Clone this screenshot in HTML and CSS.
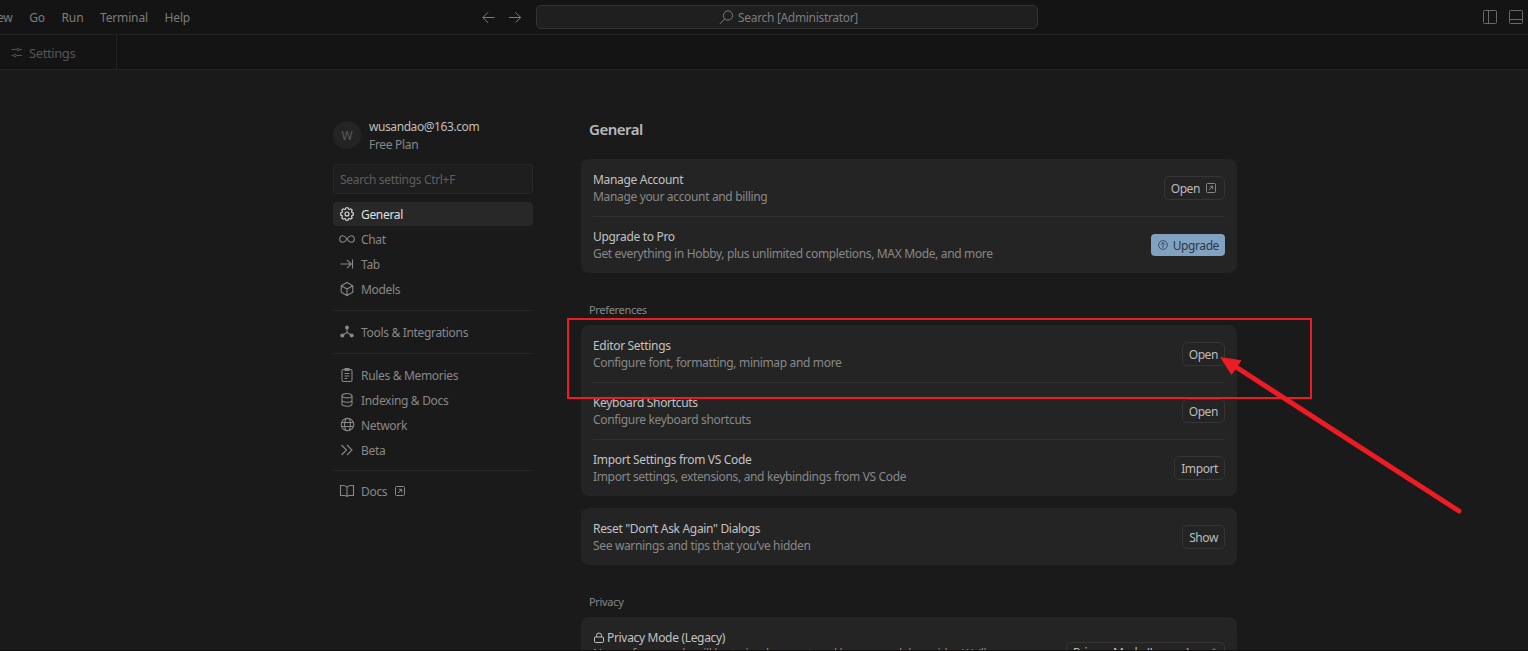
FILE: index.html
```
<!DOCTYPE html>
<html lang="en">
<head>
    <meta charset="UTF-8">
    <meta name="viewport" content="width=device-width, initial-scale=1.0">
    <title>Settings</title>
    <link rel="stylesheet" href="styles.css">
</head>
<body>
    <header class="titlebar">
        <nav class="menu">
            <span class="menu-view">View</span>
            <span>Go</span>
            <span>Run</span>
            <span>Terminal</span>
            <span>Help</span>
        </nav>
        <div class="history">
            <svg width="14" height="14" viewBox="0 0 14 14"><path d="M13.5 7.5H2M7 2.3L1.8 7.5 7 12.7"/></svg>
            <svg width="14" height="14" viewBox="0 0 14 14"><path d="M1 7.5h11.5M7.500 2.3l5.200 5.2-5.200 5.2"/></svg>
        </div>
        <div class="command">
            <svg width="15" height="15" viewBox="0 0 15 15"><circle cx="9" cy="5.5" r="4.6"/><path d="M5.7 8.8L1 13.8"/></svg>
            <span>Search [Administrator]</span>
        </div>
        <div class="layout-icons">
            <svg width="16" height="16" viewBox="0 0 16 16"><rect x="1.5" y="1.5" width="13" height="13" rx="1"/><path d="M6.5 1.5v13"/></svg>
            <svg width="16" height="16" viewBox="0 0 16 16"><rect x="1.5" y="1.5" width="13" height="13" rx="1"/><path d="M1.5 10.5h13"/></svg>
        </div>
    </header>

    <div class="tabs">
        <div class="tab">
            <svg width="12" height="12" viewBox="0 0 12 12"><path d="M.5 2.5h5M8.5 2.5H11M.5 8.5h2M5.5 8.5H11"/><circle cx="7" cy="2.5" r="1.3"/><circle cx="4" cy="8.5" r="1.3"/></svg>
            <span>Settings</span>
        </div>
    </div>

    <div class="content">
        <aside class="sidebar">
            <div class="profile">
                <div class="avatar">W</div>
                <div>
                    <div class="email">wusandao@163.com</div>
                    <div class="plan">Free Plan</div>
                </div>
            </div>
            <div class="search">Search settings Ctrl+F</div>

            <div class="nav active">
                <svg width="16" height="16" viewBox="0 0 16 16"><path d="M6.5 3L7 1.700h2L9.500 3l1 .4 1.300-.6 1.400 1.400-.6 1.300.4 1 1.300.5v2l-1.300.5-.4 1 .6 1.300-1.400 1.400-1.300-.6-1 .4L9 14.300H7L6.500 13l-1-.4-1.300.6-1.400-1.400.6-1.300-.4-1L1.700 9V7L3 6.500l.4-1-.6-1.300 1.400-1.400 1.300.6z"/><circle cx="8" cy="8" r="2"/></svg>
                <span>General</span>
            </div>
            <div class="nav">
                <svg width="16" height="16" viewBox="0 0 16 16"><path d="M8 8C6.5 5.7 5.5 4.7 4 4.7a3.300 3.300 0 0 0 0 6.600C5.500 11.300 6.500 10.300 8 8s2.500-3.300 4-3.300a3.300 3.300 0 0 1 0 6.600C10.500 11.300 9.500 10.300 8 8z"/></svg>
                <span>Chat</span>
            </div>
            <div class="nav">
                <svg width="16" height="16" viewBox="0 0 16 16"><path d="M1.500 8H12M8 3.800L12.200 8 8 12.200M13.500 3.500v9"/></svg>
                <span>Tab</span>
            </div>
            <div class="nav">
                <svg width="16" height="16" viewBox="0 0 16 16"><path d="M8 1.500l5.800 3.200v6.600L8 14.500l-5.800-3.200V4.700zM2.200 4.700L8 8l5.800-3.300M8 8v6.500"/></svg>
                <span>Models</span>
            </div>
            <div class="divider"></div>
            <div class="nav">
                <svg width="16" height="16" viewBox="0 0 16 16"><path d="M8 4v5M8 8.500l-4.500 2.700M8 8.500l4.500 2.700"/><g class="solid"><circle cx="8" cy="3.500" r="2"/><circle cx="3.300" cy="11.500" r="2"/><circle cx="12.700" cy="11.500" r="2"/></g></svg>
                <span>Tools &amp; Integrations</span>
            </div>
            <div class="divider"></div>
            <div class="nav">
                <svg width="16" height="16" viewBox="0 0 16 16"><rect x="3" y="2.500" width="10" height="12" rx="1.500"/><path d="M5.500 6.500h5M5.500 9h5M5.500 11.500h3"/><path class="solid" d="M5.500 1h5v3h-5z"/></svg>
                <span>Rules &amp; Memories</span>
            </div>
            <div class="nav">
                <svg width="16" height="16" viewBox="0 0 16 16"><ellipse cx="8" cy="3.700" rx="5" ry="2.200"/><path d="M3 3.700v8.300c0 3 10 3 10 0V3.700M3 8c0 3 10 3 10 0"/></svg>
                <span>Indexing &amp; Docs</span>
            </div>
            <div class="nav">
                <svg width="16" height="16" viewBox="0 0 16 16"><circle cx="8.500" cy="7.500" r="6.300"/><ellipse cx="8.500" cy="7.500" rx="2.900" ry="6.300"/><path d="M2.700 5.500h11.600M2.700 9.500h11.600"/></svg>
                <span>Network</span>
            </div>
            <div class="nav">
                <svg width="16" height="16" viewBox="0 0 16 16"><path d="M2.500 3l5 5-5 5M8 3l5 5-5 5"/></svg>
                <span>Beta</span>
            </div>
            <div class="divider last"></div>
            <div class="nav">
                <svg width="16" height="16" viewBox="0 0 16 16"><path d="M8 4C7 3 5.500 2.500 4 2.500H1.500v10H5c1.500 0 2.500.3 3 1 .5-.7 1.500-1 3-1h3.500v-10H12C10.500 2.500 9 3 8 4zM8 4v9.500"/></svg>
                <span>Docs</span>
                <svg class="external" width="10" height="10" viewBox="0 0 10 10"><rect x=".5" y=".5" width="9" height="9" rx="1"/><path d="M3 7l3.700-3.700M3.800 3.300h2.900v2.900"/></svg>
            </div>
        </aside>

        <main class="main">
            <h1>General</h1>
            <section class="card">
                <div class="row">
                    <div class="info">
                        <div class="name">Manage Account</div>
                        <div class="desc">Manage your account and billing</div>
                    </div>
                    <button class="btn">Open <svg class="external" width="10" height="10" viewBox="0 0 10 10"><rect x=".5" y=".5" width="9" height="9" rx="1"/><path d="M3 7l3.700-3.700M3.800 3.300h2.900v2.900"/></svg></button>
                </div>
                <div class="row">
                    <div class="info">
                        <div class="name">Upgrade to Pro</div>
                        <div class="desc">Get everything in Hobby, plus unlimited completions, MAX Mode, and more</div>
                    </div>
                    <button class="btn primary"><svg width="10" height="10" viewBox="0 0 10 10"><circle cx="5" cy="5" r="4.400"/><path d="M5 7.800V2.500M2.900 4.600L5 2.500l2.100 2.100"/></svg> Upgrade</button>
                </div>
            </section>

            <h2>Preferences</h2>
            <section class="card">
                <div class="row">
                    <div class="info">
                        <div class="name">Editor Settings</div>
                        <div class="desc">Configure font, formatting, minimap and more</div>
                    </div>
                    <button class="btn">Open</button>
                </div>
                <div class="row">
                    <div class="info">
                        <div class="name">Keyboard Shortcuts</div>
                        <div class="desc">Configure keyboard shortcuts</div>
                    </div>
                    <button class="btn">Open</button>
                </div>
                <div class="row">
                    <div class="info">
                        <div class="name">Import Settings from VS Code</div>
                        <div class="desc">Import settings, extensions, and keybindings from VS Code</div>
                    </div>
                    <button class="btn">Import</button>
                </div>
            </section>
            <section class="card reset">
                <div class="row">
                    <div class="info">
                        <div class="name">Reset "Don’t Ask Again" Dialogs</div>
                        <div class="desc">See warnings and tips that you’ve hidden</div>
                    </div>
                    <button class="btn">Show</button>
                </div>
            </section>

            <h2>Privacy</h2>
            <section class="card">
                <div class="row privacy">
                    <div class="info">
                        <div class="name"><svg width="12" height="12" viewBox="0 0 12 12"><rect x="1.500" y="5" width="9" height="5.500" rx="1"/><path d="M3.500 5V3.500a2.500 2.500 0 0 1 5 0V5"/></svg>Privacy Mode (Legacy)</div>
                        <div class="desc">None of your code will be trained on or stored by any model provider. We’ll</div>
                    </div>
                    <button class="btn select">Privacy Mode (Legacy) <svg width="8" height="12" viewBox="0 0 8 12"><path d="M1 4.500l3-3 3 3M1 7.500l3 3 3-3"/></svg></button>
                </div>
            </section>
        </main>
    </div>

    <!-- highlight box and arrow -->
    <svg class="annotation" width="1528" height="651" viewBox="0 0 1528 651">
        <rect x="568" y="319" width="743" height="79"/>
        <path d="M1236 367L1459 511"/>
        <polygon points="1220,357 1241.500,360.300 1237,367 1231.500,375"/>
    </svg>
</body>
</html>
```
FILE: styles.css
```
* {
    box-sizing: border-box;
}
body {
    margin: 0;
    height: 651px;
    overflow: hidden;
    display: flex;
    flex-direction: column;
    background: #1a1a1a;
    border-bottom: 1px solid #120e0e;
    color: #888;
    font-family: "Noto Sans", "Open Sans", sans-serif;
    font-size: 12px;
    line-height: 18px;
    letter-spacing: -0.32px;
    white-space: nowrap;
}
svg {
    flex: none;
    fill: none;
    stroke: currentColor;
    stroke-width: 1;
}
.solid {
    fill: currentColor;
    stroke: none;
}
.titlebar {
    flex: none;
    display: flex;
    align-items: center;
    height: 35px;
    background: #141414;
    border-bottom: 1px solid #222;
}
.menu {
    width: 481px;
    padding-top: 1px;
    display: flex;
    gap: 16.6px;
    color: #7c7c7c;
    letter-spacing: -0.15px;
}
.menu-view {
    margin-left: -13px;
}
.history {
    width: 55px;
    display: flex;
    gap: 13px;
    color: #7c7c7c;
}
.command {
    width: 502px;
    height: 24px;
    display: flex;
    align-items: center;
    justify-content: center;
    gap: 4px;
    padding-left: 3px;
    background: #1f1f1f;
    border: 1px solid #333;
    border-radius: 5px;
    color: #7c7c7c;
}
.command span {
    padding-top: 1px;
}
.layout-icons {
    margin-left: auto;
    padding-right: 4px;
    display: flex;
    gap: 10px;
    color: #696969;
}
.tabs {
    flex: none;
    display: flex;
    height: 35px;
    background: #141414;
    border-bottom: 1px solid #222;
}
.tab {
    width: 117px;
    display: flex;
    align-items: center;
    gap: 6px;
    padding: 2px 0 0 11px;
    border-right: 1px solid #222;
    color: #555;
    font-size: 13px;
    letter-spacing: -0.4px;
}
.content {
    flex: 1;
    min-height: 0;
    overflow: hidden;
    display: flex;
    gap: 48px;
    padding: 48px 0 0 333px;
}
.sidebar {
    width: 200px;
}
.profile {
    display: flex;
    gap: 8px;
    height: 46px;
}
.avatar {
    width: 28px;
    height: 28px;
    margin-top: 3px;
    border-radius: 50%;
    background: #242424;
    color: #5c5c5c;
    line-height: 29px;
    text-align: center;
}
.email {
    color: #bfbfbf;
    letter-spacing: -0.42px;
}
.search {
    height: 30px;
    margin-bottom: 8px;
    padding: 0 6px;
    background: #1e1e1e;
    border: 1px solid #262626;
    border-radius: 3px;
    color: #5f5f5f;
    line-height: 29px;
}
.nav {
    display: flex;
    align-items: center;
    gap: 6px;
    height: 24px;
    margin-bottom: 1px;
    padding: 0 6px;
    border-radius: 4px;
}
.nav span {
    padding-top: 2px;
}
.nav svg {
    margin-bottom: 1px;
    stroke-width: 1.1;
}
.nav.active {
    background: #282828;
    color: #e0e0e0;
}
.nav .external {
    margin-left: 2px;
    stroke-width: 1;
}
.divider {
    height: 1px;
    margin: 9px 0;
    background: #262626;
}
.divider.last {
    margin: 8px 0;
}
.main {
    width: 656px;
}
h1 {
    height: 41px;
    margin: 0;
    padding: 1px 8px;
    color: #b9b9b9;
    font-size: 15px;
    font-weight: 600;
    line-height: 20px;
    letter-spacing: -0.5px;
}
h2 {
    margin: 0;
    padding: 28px 8px 6px;
    font-size: 11px;
    font-weight: 400;
    line-height: 18px;
}
.card {
    padding: 0 12px;
    background: #242424;
    border-radius: 8px;
}
.row {
    display: flex;
    align-items: center;
    justify-content: space-between;
    height: 57px;
}
.row + .row {
    border-top: 1px solid #303030;
}
.info {
    line-height: 17px;
}
.name {
    display: flex;
    align-items: center;
    gap: 2px;
    color: #c2c2c2;
}
.desc {
    letter-spacing: -0.34px;
}
.reset {
    margin-top: 12px;
}
.btn {
    display: flex;
    align-items: center;
    gap: 6px;
    height: 24px;
    padding: 2px 6px 0;
    background: none;
    border: 1px solid #353535;
    border-radius: 5px;
    color: #bcbcbc;
    font: inherit;
    letter-spacing: -0.4px;
}
.btn svg {
    margin-bottom: 2px;
    color: #858585;
}
.btn .external {
    margin-right: 2px;
}
.primary {
    height: 22px;
    padding: 1px 6px 0 7px;
    gap: 5px;
    background: #81a1c1;
    border: 0;
    border-radius: 4px;
    color: #2b3848;
}
.primary svg {
    color: #3e5065;
}
.privacy {
    height: 74px;
    align-items: flex-start;
    padding-top: 12px;
}
.privacy .desc {
    margin-top: -1px;
}
.select {
    width: 159px;
    padding: 0 6px 2px;
    justify-content: space-between;
    margin-top: 13px;
}
.select svg {
    margin: 0;
}
.annotation {
    position: absolute;
    top: 0;
    left: 0;
    stroke: #ed1c24;
}
.annotation rect {
    stroke-width: 2;
}
.annotation path {
    stroke-width: 5;
    stroke-linecap: round;
}
.annotation polygon {
    fill: #ed1c24;
    stroke: none;
}
```
